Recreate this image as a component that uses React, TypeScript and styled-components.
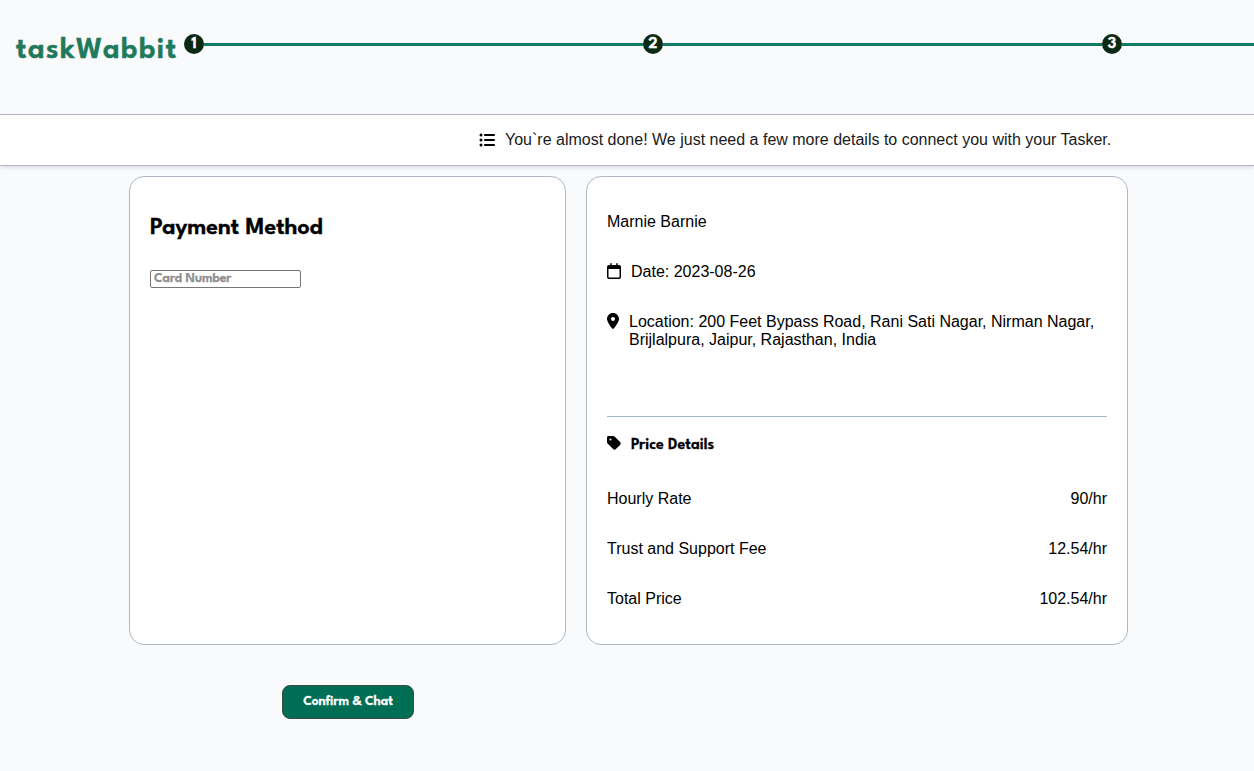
import React from "react";
import styled, { createGlobalStyle } from "styled-components";
import { FaListUl, FaRegCalendar, FaLocationDot, FaTag } from "react-icons/fa6";

const GlobalStyle = createGlobalStyle`
  *, *::before, *::after { box-sizing: border-box; }
  body {
    margin: 0;
    background: #f9fafc;
    color: #000;
    font-family: "Liberation Sans", Arial, sans-serif;
    font-size: 16px;
    line-height: 18px;
    overflow: hidden;
  }
`;

const display = `"League Spartan", Lato, sans-serif`;

const Header = styled.header`
  display: flex;
  align-items: flex-start;
  height: 114px;
  padding: 34px 0 0 16px;
  overflow: hidden;
`;

const Logo = styled.div`
  flex: none;
  width: 168px;
  padding-top: 3px;
  font: 600 30px/28px ${display};
  letter-spacing: 1.5px;
  color: #1f7a5c;
  -webkit-text-stroke: 0.5px;
  white-space: nowrap;
`;

const Steps = styled.div`
  display: flex;
  align-items: center;
  flex: none;
`;

const StepDot = styled.div`
  width: 20px;
  height: 20px;
  border-radius: 50%;
  background: #0a2915;
  color: #fff;
  font: 600 16px/22px ${display};
  -webkit-text-stroke: 0.5px;
  text-align: center;
`;

const StepLine = styled.div`
  width: 439px;
  height: 3px;
  margin-top: 1px;
  background: #117a60;
`;

const Banner = styled.div`
  display: flex;
  align-items: center;
  gap: 10px;
  height: 52px;
  padding-left: 479px;
  border: solid #b0b7c3;
  border-width: 1px 0;
  background: #fff;
  color: #1a1a1a;
  box-shadow: 0 2px 4px rgba(0, 0, 0, 0.1);
  white-space: nowrap;

  svg { color: #000; }
`;

const Columns = styled.main`
  display: grid;
  grid-template-columns: 437px 542px;
  column-gap: 20px;
  margin: 10px 0 0 129px;
`;

const Card = styled.section`
  height: 469px;
  padding: 0 20px;
  border: 1px solid #afb7c2;
  border-radius: 15px;
  background: #fff;
`;

const Title = styled.h2`
  margin: 37px 0 0;
  font: 600 24px/28px ${display};
  -webkit-text-stroke: 0.4px;
  white-space: nowrap;
`;

const CardInput = styled.input`
  display: block;
  width: 151px;
  height: 18px;
  margin-top: 28px;
  padding: 0 3px 1px;
  border: 1px solid #767676;
  border-radius: 2px;
  font: 600 13.333px/15px ${display};
  outline: none;

  &::placeholder {
    color: #8e8e8e;
    opacity: 1;
    -webkit-text-stroke: 0.3px;
  }
`;

const Name = styled.p`
  margin: 36px 0 0;
`;

const Icon = styled.span<{ $width: number }>`
  display: flex;
  flex: none;
  width: ${(p) => p.$width}px;
  height: 16px;

  svg { width: 100%; height: 100%; }
`;

const Detail = styled.div`
  display: flex;
  gap: 10px;
  margin-top: 32px;
`;

const Divider = styled.hr`
  height: 1px;
  margin: 67px 0 0;
  border: 0;
  background: #a9b5c6;
`;

const PriceTitle = styled.h3`
  display: flex;
  gap: 10px;
  height: 18px;
  margin: 18px 0 37px;
  font: 600 16px/22px ${display};

  span:last-child { -webkit-text-stroke: 0.3px; }
`;

const PriceRow = styled.div`
  display: flex;
  justify-content: space-between;
  margin-bottom: 32px;
`;

const Confirm = styled.button`
  display: block;
  width: 132px;
  height: 34px;
  margin: 40px 0 0 282px;
  padding: 0;
  border: 1px solid #3d4a40;
  border-radius: 8px;
  background: #006e54;
  color: #fff;
  font: 600 13.333px/16px ${display};
  -webkit-text-stroke: 0.3px;
  white-space: nowrap;
`;

const prices = [
  ["Hourly Rate", "90/hr"],
  ["Trust and Support Fee", "12.54/hr"],
  ["Total Price", "102.54/hr"],
];

export default function App() {
  return (
    <>
      <GlobalStyle />
      <Header>
        <Logo>taskWabbit</Logo>
        <Steps>
          <StepDot>1</StepDot>
          <StepLine />
          <StepDot>2</StepDot>
          <StepLine />
          <StepDot>3</StepDot>
          <StepLine />
        </Steps>
      </Header>
      <Banner>
        <Icon $width={16}><FaListUl /></Icon>
        <span>You`re almost done! We just need a few more details to connect you with your Tasker.</span>
      </Banner>
      <Columns>
        <Card>
          <Title>Payment Method</Title>
          <CardInput placeholder="Card Number" />
        </Card>
        <Card>
          <Name>Marnie Barnie</Name>
          <Detail>
            <Icon $width={14}><FaRegCalendar /></Icon>
            <span>Date: 2023-08-26</span>
          </Detail>
          <Detail>
            <Icon $width={12}><FaLocationDot /></Icon>
            <span>Location: 200 Feet Bypass Road, Rani Sati Nagar, Nirman Nagar, Brijlalpura, Jaipur, Rajasthan, India</span>
          </Detail>
          <Divider />
          <PriceTitle>
            <Icon $width={14}><FaTag /></Icon>
            <span>Price Details</span>
          </PriceTitle>
          {prices.map(([label, value]) => (
            <PriceRow key={label}>
              <span>{label}</span>
              <span>{value}</span>
            </PriceRow>
          ))}
        </Card>
      </Columns>
      <Confirm>Confirm &amp; Chat</Confirm>
    </>
  );
}
